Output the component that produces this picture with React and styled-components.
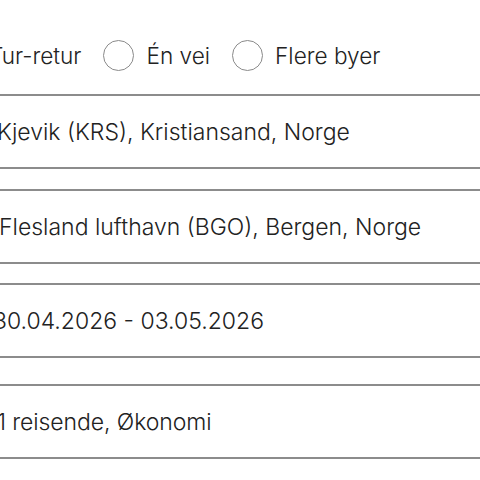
import React from "react";
import styled, { createGlobalStyle } from "styled-components";

const GlobalStyle = createGlobalStyle`
  html, body {
    margin: 0;
    padding: 0;
    background: #ffffff;
    overflow: hidden;
  }
`;

const Form = styled.div`
  width: 540px;
  margin-left: -30px;
  padding-top: 35px;
  font-family: Inter, "Liberation Sans", sans-serif;
  color: #222222;
`;

const TripTypes = styled.div`
  display: flex;
  align-items: center;
  height: 40px;
  padding-left: 19px;
  gap: 22px;
  font-size: 22.6px;
  font-weight: 300;
  margin-bottom: 19px;
`;

const TripOption = styled.label`
  display: flex;
  align-items: center;
  gap: 12px;
`;

const Radio = styled.span`
  display: inline-block;
  width: 31px;
  height: 31px;
  border: 1.5px solid #8a8a8a;
  border-radius: 50%;
  box-sizing: border-box;
`;

const Field = styled.div`
  display: flex;
  align-items: center;
  height: 75px;
  box-sizing: border-box;
  border-top: 2px solid #8c8c8c;
  border-bottom: 2px solid #8c8c8c;
  padding-left: ${(p) => p.$indent ?? 27}px;
  margin-bottom: ${(p) => p.$gap ?? 20}px;
  font-family: Inter, "Liberation Sans", sans-serif;
  font-size: 23px;
  font-weight: 300;
  letter-spacing: ${(p) => p.$spacing ?? 0}px;
  color: #222222;
`;

const App = () => (
  <>
    <GlobalStyle />
    <Form>
      <TripTypes>
        <TripOption>Tur-retur</TripOption>
        <TripOption>
          <Radio />
          Én vei
        </TripOption>
        <TripOption>
          <Radio />
          Flere byer
        </TripOption>
      </TripTypes>
      <Field $indent={27}>Kjevik (KRS), Kristiansand, Norge</Field>
      <Field $gap={19} $indent={29}>Flesland lufthavn (BGO), Bergen, Norge</Field>
      <Field $gap={26} $indent={23} $spacing={0}>
        30.04.2026 - 03.05.2026
      </Field>
      <Field $indent={27} $spacing={-0.1}>
        1 reisende, Økonomi
      </Field>
    </Form>
  </>
);

export default App;
